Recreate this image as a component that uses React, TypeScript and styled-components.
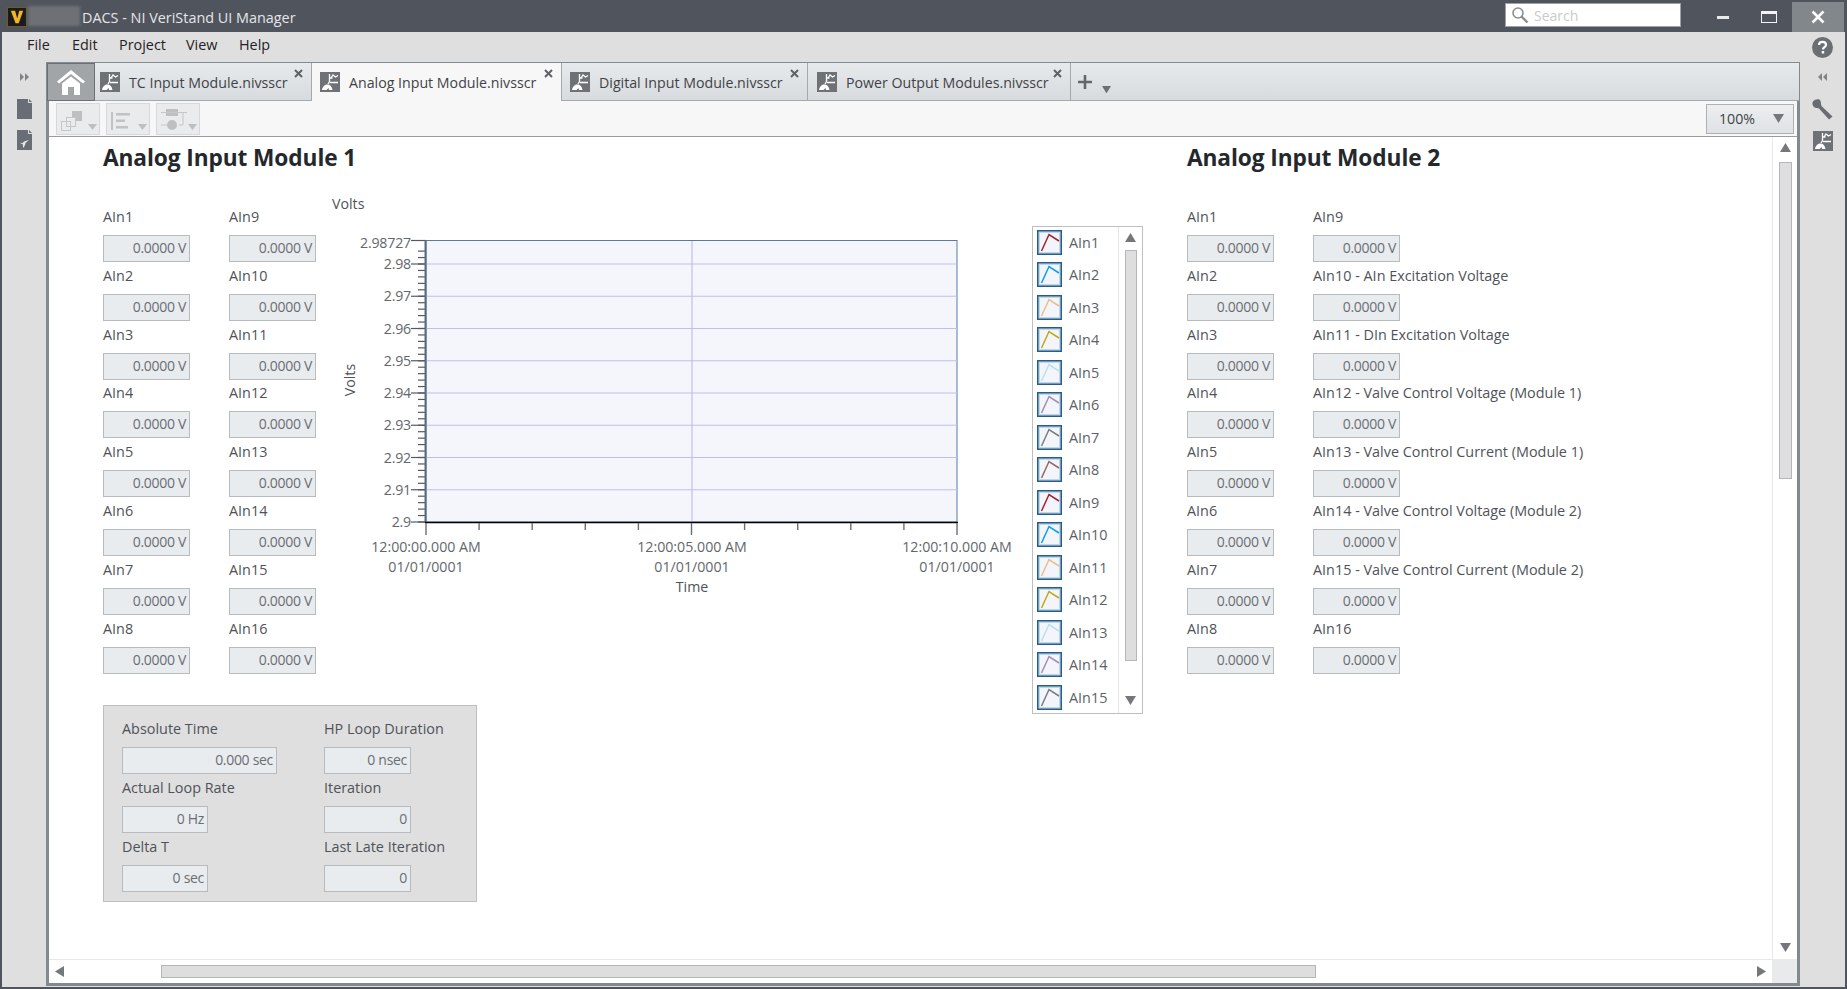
import React from 'react';
import styled, { createGlobalStyle } from 'styled-components';

const FONT = '"Open Sans", "Noto Sans", "Liberation Sans", sans-serif';

const GlobalStyle = createGlobalStyle`
  html, body {
    margin: 0;
    padding: 0;
    background: #dfdfdf;
  }
  body {
    font-family: ${FONT};
    font-size: 14.4px;
    overflow: hidden;
  }
`;

const Window = styled.div`
  width: 1847px;
  height: 989px;
  box-sizing: border-box;
  display: flex;
  flex-direction: column;
  background: #dfdfdf;
  border: 2px solid #50545c;
  border-top: none;
`;

const TitleBar = styled.div`
  height: 32px;
  flex: none;
  margin: 0 -2px;
  padding-left: 7px;
  background: #50545c;
  display: flex;
  align-items: flex-start;
  color: #e4e6e9;
`;

const AppLogo = styled.svg`
  flex: none;
  margin-top: 7px;
`;

const Redacted = styled.div`
  width: 52px;
  height: 20px;
  margin: 6px 2px 0 1px;
  background: #6d7175;
  filter: blur(1.5px);
`;

const TitleText = styled.span`
  line-height: 20px;
  margin-top: 8px;
  font-size: 14.4px;
`;

const SearchBox = styled.div`
  width: 176px;
  height: 24px;
  box-sizing: border-box;
  margin: 3px 19px 0 auto;
  padding-left: 5px;
  display: flex;
  align-items: center;
  gap: 5px;
  background: #fff;
  border: 1px solid #9ea2a6;
  color: #c9cbcd;
  font-size: 14px;
`;

const WindowButton = styled.div<{ $w: number; $active?: boolean }>`
  width: ${p => p.$w}px;
  height: 30px;
  margin-top: 2px;
  margin-right: ${p => (p.$active ? 3 : 0)}px;
  display: flex;
  align-items: center;
  justify-content: center;
  background: ${p => (p.$active ? '#82878b' : 'transparent')};
`;

const MenuBar = styled.div`
  height: 30px;
  box-sizing: border-box;
  flex: none;
  display: flex;
  align-items: center;
  padding: 0 12px 6px 25px;
  color: #1f2226;
  font-size: 14.4px;
`;

const MenuItem = styled.span<{ $w: number }>`
  width: ${p => p.$w}px;
`;

const HelpSlot = styled.div`
  margin: 6px 0 0 auto;
  display: flex;
`;

const Body = styled.div`
  flex: 1;
  min-height: 0;
  display: flex;
  margin-bottom: 1px;
`;

const Rail = styled.div<{ $w: number }>`
  width: ${p => p.$w}px;
  flex: none;
  display: flex;
  flex-direction: column;
  align-items: center;
  padding-top: 11px;
  gap: 11px;
`;

const RailToggle = styled.div`
  display: flex;
  margin-bottom: 7px;
`;

const Main = styled.div`
  flex: 1;
  min-width: 0;
  display: flex;
  flex-direction: column;
  border: 3px solid #828a90;
  border-top: 1px solid #828a90;
`;

const TabStrip = styled.div`
  height: 37px;
  flex: none;
  margin: 0 -2px;
  display: flex;
  background: linear-gradient(#e7eaec, #d7dbde);
  border-bottom: 1px solid #a4a9ad;
`;

const HomeTab = styled.div`
  width: 48px;
  box-sizing: border-box;
  margin-bottom: -1px;
  display: flex;
  align-items: center;
  justify-content: center;
  background: #a2a5a8;
  border: 1px solid #6c7075;
`;

const Tab = styled.div<{ $w: number; $pad: number; $active?: boolean }>`
  width: ${p => p.$w}px;
  box-sizing: border-box;
  position: relative;
  display: flex;
  align-items: center;
  gap: 9px;
  padding-left: ${p => p.$pad}px;
  color: #3f4347;
  font-size: 14.2px;
  white-space: nowrap;
  border-right: 1px solid #a4a9ad;
  background: ${p => (p.$active ? '#f7f7f7' : 'transparent')};
  margin-bottom: ${p => (p.$active ? -1 : 0)}px;
`;

const TabName = styled.span`
  margin-top: 1px;
`;

const TabIcon = styled.svg`
  flex: none;
`;

const TabClose = styled.svg`
  position: absolute;
  top: 6px;
  right: 8px;
`;

const AddTab = styled.div`
  display: flex;
  align-items: flex-end;
  gap: 10px;
  padding: 0 0 7px 7px;
`;

const PlusIcon = styled.svg`
  margin-bottom: 4px;
`;

const Toolbar = styled.div`
  height: 35px;
  flex: none;
  display: flex;
  align-items: center;
  gap: 6px;
  padding: 0 3px 0 7px;
  background: #f7f7f7;
  border-bottom: 1px solid #989ca0;
`;

const ToolButton = styled.div`
  width: 44px;
  height: 32px;
  box-sizing: border-box;
  background: #e9ebec;
  border: 1px solid #d6d8d9;
  display: flex;
`;

const ZoomSelect = styled.div`
  width: 88px;
  height: 30px;
  box-sizing: border-box;
  margin-left: auto;
  padding: 0 9px 0 12px;
  display: flex;
  align-items: center;
  justify-content: space-between;
  background: linear-gradient(#eceef0, #dfe2e4);
  border: 1px solid #aeb1b4;
  color: #3f4347;
  font-size: 14.2px;
`;

const Canvas = styled.div`
  flex: 1;
  min-height: 0;
  display: grid;
  grid-template-columns: 1fr 25px;
  grid-template-rows: 1fr 24px;
  background: #fff;
`;

const Content = styled.div`
  min-height: 0;
  overflow: hidden;
  display: flex;
  padding: 5px 0 0 54px;
`;

const Module = styled.div<{ $w: number }>`
  width: ${p => p.$w}px;
  flex: none;
`;

const Heading = styled.h2`
  margin: 0 0 10px;
  height: 32px;
  line-height: 32px;
  font-size: 22.7px;
  font-weight: 700;
  color: #24282c;
  letter-spacing: -0.1px;
`;

const ModuleGrid = styled.div`
  display: grid;
  grid-template-columns: 213px 716px 111px;
  grid-template-rows: 489px auto;
  row-gap: 32px;
`;

const FieldColumns = styled.div`
  display: flex;
  padding-top: 23px;
`;

const FieldColumn = styled.div<{ $w: number }>`
  width: ${p => p.$w}px;
  flex: none;
  display: grid;
  grid-auto-rows: 58.8px;
`;

const FieldWrap = styled.div`
  display: flex;
  flex-direction: column;
  align-items: flex-start;
`;

const FieldLabel = styled.div`
  height: 20px;
  line-height: 20px;
  margin-bottom: 8px;
  color: #4f5359;
  font-size: 14.4px;
  white-space: nowrap;
`;

const ValueBox = styled.div<{ $w?: number }>`
  width: ${p => p.$w ?? 87}px;
  height: 27px;
  box-sizing: border-box;
  padding-right: 3px;
  text-align: right;
  line-height: 24px;
  color: #6a6e73;
  font-size: 14px;
  letter-spacing: -0.3px;
  background: #e9ecee;
  border: 1.5px solid #b8bbbd;
`;

const ChartSvg = styled.svg`
  display: block;
  grid-row: 1 / span 2;
  grid-column: 2;
  font-family: ${FONT};
  font-size: 14.2px;
`;

const Legend = styled.div`
  grid-row: 1 / span 2;
  grid-column: 3;
  height: 488px;
  margin-top: 42px;
  box-sizing: border-box;
  display: flex;
  background: #fff;
  border: 1.5px solid #bdbfc1;
`;

const LegendList = styled.div`
  width: 86px;
  flex: none;
  box-sizing: border-box;
  padding: 3px 0 0 4px;
  border-right: 1px solid #e6e6e6;
`;

const LegendRow = styled.div`
  height: 32.48px;
  display: flex;
  align-items: flex-start;
  gap: 7px;
  color: #5d6167;
  font-size: 14.4px;
  line-height: 25px;
`;

const Swatch = styled.svg`
  flex: none;
`;

const LegendScroll = styled.div`
  flex: 1;
  display: flex;
  flex-direction: column;
  align-items: center;
  padding: 6px 0 8px;
`;

const LegendThumb = styled.div`
  width: 12px;
  height: 411px;
  box-sizing: border-box;
  margin: 8px 0 auto;
  background: #dedede;
  border: 1.5px solid #b4b6b8;
`;

const Panel = styled.div`
  grid-row: 2;
  grid-column: 1 / span 2;
  width: 374px;
  height: 197px;
  box-sizing: border-box;
  padding: 13px 0 0 18px;
  display: flex;
  background: #dfdfdf;
  border: 1.5px solid #bcbec0;
`;

const VScroll = styled.div`
  display: flex;
  flex-direction: column;
  align-items: center;
  padding: 6px 0 7px;
  border-left: 1px solid #e8e8e8;
`;

const VThumb = styled.div`
  width: 13px;
  height: 317px;
  box-sizing: border-box;
  margin: 10px 0 auto;
  background: #dedede;
  border: 1.5px solid #b4b6b8;
`;

const HScroll = styled.div`
  display: flex;
  align-items: center;
  padding: 0 6px;
  border-top: 1px solid #e8e8e8;
`;

const HThumb = styled.div`
  width: 1155px;
  height: 13px;
  box-sizing: border-box;
  margin: 0 auto 0 97px;
  background: #dedede;
  border: 1.5px solid #b4b6b8;
`;

const Corner = styled.div`
  background: #e9eaec;
`;

const Arrow: React.FC<{ dir: 'up' | 'down' | 'left' | 'right'; size?: number; color?: string }> = ({ dir, size = 11, color = '#74787c' }) => {
  const pts = {
    up: '0,9 5.5,0 11,9',
    down: '0,0 11,0 5.5,9',
    left: '9,0 9,11 0,5.5',
    right: '0,0 9,5.5 0,11',
  }[dir];
  const w = dir === 'up' || dir === 'down' ? 11 : 9;
  const h = dir === 'up' || dir === 'down' ? 9 : 11;
  return (
    <svg width={(w * size) / 11} height={(h * size) / 11} viewBox={`0 0 ${w} ${h}`}>
      <polygon points={pts} fill={color} />
    </svg>
  );
};

const ScreenIcon: React.FC = () => (
  <TabIcon width="20" height="20" viewBox="0 0 20 20">
    <rect width="20" height="20" fill="#6e7276" />
    <path d="M9.5 2v7.5M9.5 9.5l-1.5 2.5M9.5 6h3M11 6l2-3 2.5 2 2.5-1.5M10 10.5h8" stroke="#fff" strokeWidth="1.3" fill="none" />
    <path d="M2 18c.5-3.5 3-5.500 5.500-5.500 2.500 0 4.500 2 5 5.500h-3.500l-.5-2-2 2z" fill="#fff" />
  </TabIcon>
);

const CloseGlyph: React.FC = () => (
  <TabClose width="9" height="9" viewBox="0 0 9 9">
    <path d="M1 1l7 7M8 1l-7 7" stroke="#5e6266" strokeWidth="2" />
  </TabClose>
);

const Chevrons: React.FC<{ left?: boolean }> = ({ left }) => (
  <RailToggle>
    <svg width="10" height="8" viewBox="0 0 10 8">
      <path d={left ? 'M4 0v8L0 4zM9 0v8L5 4z' : 'M1 0v8l4-4zM6 0v8l4-4z'} fill="#808488" />
    </svg>
  </RailToggle>
);

const Field: React.FC<{ label: string; value: string; w?: number }> = ({ label, value, w }) => (
  <FieldWrap>
    <FieldLabel>{label}</FieldLabel>
    <ValueBox $w={w}>{value}</ValueBox>
  </FieldWrap>
);

const leftLabels = ['AIn1', 'AIn2', 'AIn3', 'AIn4', 'AIn5', 'AIn6', 'AIn7', 'AIn8'];
const rightLabels = ['AIn9', 'AIn10', 'AIn11', 'AIn12', 'AIn13', 'AIn14', 'AIn15', 'AIn16'];
const rightLabels2 = [
  'AIn9',
  'AIn10 - AIn Excitation Voltage',
  'AIn11 - DIn Excitation Voltage',
  'AIn12 - Valve Control Voltage (Module 1)',
  'AIn13 - Valve Control Current (Module 1)',
  'AIn14 - Valve Control Voltage (Module 2)',
  'AIn15 - Valve Control Current (Module 2)',
  'AIn16',
];

const plotColors = ['#a5202f', '#0a9ef0', '#eabd8c', '#bfa816', '#b4e2f2', '#a48cb8', '#7c7c7c', '#8e6a60'];
const legendItems = Array.from({ length: 15 }, (_, i) => ({ name: `AIn${i + 1}`, color: plotColors[i % 8] }));

const Y = (v: number) => 522 - (v - 2.9) * 3225;
const yMajor = [2.98, 2.97, 2.96, 2.95, 2.94, 2.93, 2.92, 2.91, 2.9];
const yMinor = Array.from({ length: 43 }, (_, i) => 2.9 + i * 0.002).filter(v => v <= 2.98727);
const xTicks = Array.from({ length: 11 }, (_, i) => 426 + i * 53.1);

const Chart: React.FC = () => (
  <ChartSvg width="716" height="489" viewBox="316 184 716 489">
    <text x="332" y="209" fill="#4f5359">Volts</text>
    <rect x="426" y="240.500" width="531" height="281.500" fill="#f4f6fb" stroke="#567aa3" />
    {yMajor.slice(0, 8).map(v => (
      <line key={v} x1="426" x2="957" y1={Y(v)} y2={Y(v)} stroke="#bcc0ec" strokeWidth="1.200" />
    ))}
    <line x1="692" x2="692" y1="241" y2="522" stroke="#bcc0ec" strokeWidth="1.200" />
    {yMinor.map(v => (
      <line key={v} x1="418" x2="426" y1={Y(v)} y2={Y(v)} stroke="#55595e" strokeWidth="1.200" />
    ))}
    {yMajor.map(v => (
      <line key={v} x1="411" x2="426" y1={Y(v)} y2={Y(v)} stroke="#55595e" strokeWidth="1.200" />
    ))}
    <line x1="411" x2="426" y1="240.500" y2="240.500" stroke="#55595e" strokeWidth="1.200" />
    <line x1="425.500" x2="425.500" y1="240" y2="522" stroke="#5a6a80" strokeWidth="2" />
    <line x1="425" x2="958" y1="522.500" y2="522.500" stroke="#000" strokeWidth="1.500" />
    {xTicks.map((x, i) => (
      <line key={x} x1={x} x2={x} y1="523" y2={i % 5 === 0 ? 535 : 530} stroke="#6a6e72" strokeWidth="1.400" />
    ))}
    <g fill="#63676c" textAnchor="end">
      <text x="411" y="248" letterSpacing="-0.2">2.98727</text>
      {yMajor.map(v => (
        <text key={v} x="411" y={Y(v) + 5} letterSpacing="-0.2">{v === 2.9 ? '2.9' : v.toFixed(2)}</text>
      ))}
    </g>
    <g fill="#63676c" textAnchor="middle">
      {[426, 692, 957].map((x, i) => (
        <React.Fragment key={x}>
          <text x={x} y="552">{`12:00:${['00', '05', '10'][i]}.000 AM`}</text>
          <text x={x} y="572">01/01/0001</text>
        </React.Fragment>
      ))}
      <text x="692" y="592" fill="#4f5359">Time</text>
    </g>
    <text transform="translate(355 380) rotate(-90)" textAnchor="middle" fill="#4f5359">Volts</text>
  </ChartSvg>
);

const App: React.FC = () => (
  <>
    <GlobalStyle />
    <Window>
      <TitleBar>
        <AppLogo width="20" height="20" viewBox="0 0 21 21">
          <rect x="0.500" y="0.500" width="20" height="20" fill="#1b1b1d" stroke="#6e5f2a" />
          <path d="M4 4h4.500l2.200 8 2.200-8h4.100l-4.700 13h-3.300z" fill="#f2b526" />
        </AppLogo>
        <Redacted />
        <TitleText>DACS - NI VeriStand UI Manager</TitleText>
        <SearchBox>
          <svg width="18" height="18" viewBox="0 0 18 18">
            <circle cx="7" cy="7" r="5" fill="none" stroke="#8a8e92" strokeWidth="1.600" />
            <path d="M10.500 10.500L16.500 16.500" stroke="#8a8e92" strokeWidth="2.400" />
          </svg>
          Search
        </SearchBox>
        <WindowButton $w={46}>
          <svg width="12" height="3"><rect width="12" height="3" fill="#e8e9eb" /></svg>
        </WindowButton>
        <WindowButton $w={46}>
          <svg width="16" height="12" viewBox="0 0 16 12">
            <rect x="0.500" y="1" width="15" height="10.500" fill="none" stroke="#f2f3f4" />
            <rect width="16" height="3" fill="#f2f3f4" />
          </svg>
        </WindowButton>
        <WindowButton $w={52} $active>
          <svg width="14" height="14" viewBox="0 0 14 14">
            <path d="M1.500 1.500l11 11M12.500 1.500l-11 11" stroke="#fff" strokeWidth="2.600" />
          </svg>
        </WindowButton>
      </TitleBar>
      <MenuBar>
        <MenuItem $w={45}>File</MenuItem>
        <MenuItem $w={47}>Edit</MenuItem>
        <MenuItem $w={67}>Project</MenuItem>
        <MenuItem $w={53}>View</MenuItem>
        <MenuItem $w={40}>Help</MenuItem>
        <HelpSlot>
          <svg width="21" height="21" viewBox="0 0 21 21">
            <circle cx="10.500" cy="10.500" r="10.500" fill="#6b6f74" />
            <path d="M7 8c0-2 1.500-3.200 3.500-3.200S14 6 14 7.800c0 2.400-3 2.400-3 4.700" fill="none" stroke="#fff" strokeWidth="2.200" />
            <rect x="9.700" y="14" width="2.500" height="2.500" fill="#fff" />
          </svg>
        </HelpSlot>
      </MenuBar>
      <Body>
        <Rail $w={44}>
          <Chevrons />
          <svg width="15" height="20" viewBox="0 0 15 20">
            <path d="M0 0h11v4h4v16H0zM12 0l3 3h-3z" fill="#696d75" />
          </svg>
          <svg width="15" height="20" viewBox="0 0 15 20">
            <path d="M0 0h11v4h4v16H0zM12 0l3 3h-3z" fill="#696d75" />
            <path d="M3 12.500c2 1.500 3.500 0 4 -1l5-1.500-3.500 3c0 2-1.500 3-1.500 4.500H6c0-1.500 0-2.500-.5-3.500-1 .2-2-.5-2.500-1.500z" fill="#e6e6e6" />
          </svg>
        </Rail>
        <Main>
          <TabStrip>
            <HomeTab>
              <svg width="30" height="30" viewBox="0 0 30 30">
                <path d="M15 3L1 14.500l2 2L15 7l12 9.500 2-2z" fill="#fff" />
                <path d="M6 16.500L15 9.500l9 7V28h-6v-8h-6v8H6z" fill="#fff" />
              </svg>
            </HomeTab>
            <Tab $w={217} $pad={5}><ScreenIcon /><TabName>TC Input Module.nivsscr</TabName><CloseGlyph /></Tab>
            <Tab $w={250} $pad={8} $active><ScreenIcon /><TabName>Analog Input Module.nivsscr</TabName><CloseGlyph /></Tab>
            <Tab $w={246} $pad={8}><ScreenIcon /><TabName>Digital Input Module.nivsscr</TabName><CloseGlyph /></Tab>
            <Tab $w={263} $pad={9}><ScreenIcon /><TabName>Power Output Modules.nivsscr</TabName><CloseGlyph /></Tab>
            <AddTab>
              <PlusIcon width="14" height="14" viewBox="0 0 14 14">
                <path d="M7 0v14M0 7h14" stroke="#64686c" strokeWidth="2.600" />
              </PlusIcon>
              <Arrow dir="down" size={9} color="#6c7074" />
            </AddTab>
          </TabStrip>
          <Toolbar>
            <ToolButton>
              <svg width="42" height="30" viewBox="0 0 42 30">
                <rect x="15" y="7" width="10" height="10" fill="#bdbfc1" />
                <rect x="9.500" y="13.500" width="9" height="9" fill="#e9ebec" stroke="#c4c6c8" />
                <rect x="4.500" y="17.500" width="9" height="9" fill="none" stroke="#c4c6c8" />
                <polygon points="31,20 40,20 35.500,26" fill="#bdbfc1" />
              </svg>
            </ToolButton>
            <ToolButton>
              <svg width="42" height="30" viewBox="0 0 42 30">
                <rect x="4" y="8" width="2" height="18" fill="#c0c2c4" />
                <rect x="9" y="9" width="14" height="2.500" fill="#c0c2c4" />
                <rect x="9" y="15.500" width="9" height="2.500" fill="#c0c2c4" />
                <rect x="9" y="22" width="12" height="2.500" fill="#c0c2c4" />
                <polygon points="31,20 40,20 35.500,26" fill="#bdbfc1" />
              </svg>
            </ToolButton>
            <ToolButton>
              <svg width="42" height="30" viewBox="0 0 42 30">
                <rect x="9" y="5" width="12" height="7" fill="#bdbfc1" />
                <circle cx="15" cy="21" r="5" fill="#bdbfc1" />
                <path d="M4 8.500h22v12.500h-4M4 21h6M21 8.500h9" stroke="#c4c6c8" fill="none" />
                <polygon points="31,20 40,20 35.500,26" fill="#bdbfc1" />
              </svg>
            </ToolButton>
            <ZoomSelect>
              100%
              <Arrow dir="down" />
            </ZoomSelect>
          </Toolbar>
          <Canvas>
            <Content>
              <Module $w={1084}>
                <Heading>Analog Input Module 1</Heading>
                <ModuleGrid>
                  <FieldColumns>
                    <FieldColumn $w={126}>
                      {leftLabels.map(l => <Field key={l} label={l} value="0.0000 V" />)}
                    </FieldColumn>
                    <FieldColumn $w={87}>
                      {rightLabels.map(l => <Field key={l} label={l} value="0.0000 V" />)}
                    </FieldColumn>
                  </FieldColumns>
                  <Chart />
                  <Legend>
                    <LegendList>
                      {legendItems.map(item => (
                        <LegendRow key={item.name}>
                          <Swatch width="25" height="25" viewBox="0 0 25 25">
                            <rect x="0.750" y="0.750" width="23.500" height="23.500" fill="#bcd8ea" stroke="#2a5c88" strokeWidth="1.500" />
                            <rect x="3" y="3" width="19" height="19" fill="#f3f5fb" />
                            <path d="M4.500 21L12 4.500l10 6.500" fill="none" stroke={item.color} strokeWidth="1.500" />
                          </Swatch>
                          {item.name}
                        </LegendRow>
                      ))}
                    </LegendList>
                    <LegendScroll>
                      <Arrow dir="up" />
                      <LegendThumb />
                      <Arrow dir="down" />
                    </LegendScroll>
                  </Legend>
                  <Panel>
                    <FieldColumn $w={202}>
                      <Field label="Absolute Time" value="0.000 sec" w={155} />
                      <Field label="Actual Loop Rate" value="0 Hz" w={86} />
                      <Field label="Delta T" value="0 sec" w={86} />
                    </FieldColumn>
                    <FieldColumn $w={87}>
                      <Field label="HP Loop Duration" value="0 nsec" />
                      <Field label="Iteration" value="0" />
                      <Field label="Last Late Iteration" value="0" />
                    </FieldColumn>
                  </Panel>
                </ModuleGrid>
              </Module>
              <Module $w={480}>
                <Heading>Analog Input Module 2</Heading>
                <FieldColumns>
                  <FieldColumn $w={126}>
                    {leftLabels.map(l => <Field key={l} label={l} value="0.0000 V" />)}
                  </FieldColumn>
                  <FieldColumn $w={300}>
                    {rightLabels2.map(l => <Field key={l} label={l} value="0.0000 V" />)}
                  </FieldColumn>
                </FieldColumns>
              </Module>
            </Content>
            <VScroll>
              <Arrow dir="up" />
              <VThumb />
              <Arrow dir="down" />
            </VScroll>
            <HScroll>
              <Arrow dir="left" />
              <HThumb />
              <Arrow dir="right" />
            </HScroll>
            <Corner />
          </Canvas>
        </Main>
        <Rail $w={45}>
          <Chevrons left />
          <svg width="21" height="21" viewBox="0 0 21 21">
            <path d="M7.500 0.500C4.500-.2 1.500 1 .5 3.500l3.500 3.500 3-1-.5-3zM.5 3.500C0 6.500 2 9 5 9l2 .5L17 20.500l3.500-3L9.500 7 9 5c0-2-.5-3.500-1.500-4.500z" fill="#696d72" />
          </svg>
          <ScreenIcon />
        </Rail>
      </Body>
    </Window>
  </>
);

export default App;
